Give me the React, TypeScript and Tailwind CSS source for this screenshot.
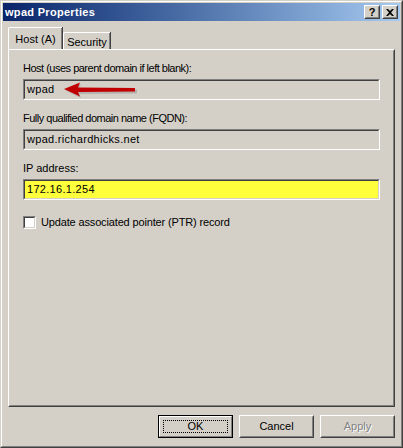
import type { ReactNode } from "react";

const font = { fontFamily: '"Liberation Sans", Arial, sans-serif' };

function Sunken({ children, className = "" }: { children: ReactNode; className?: string }) {
  return (
    <div className="border border-t-[#808080] border-l-[#808080] border-b-white border-r-white">
      <div
        className={`flex h-[19px] items-center border border-t-[#404040] border-l-[#404040] border-b-[#d4d0c8] border-r-[#d4d0c8] pl-[2px] text-[11px] tracking-[0.3px] text-black ${className}`}
      >
        {children}
      </div>
    </div>
  );
}

function Button({
  label,
  isDefault = false,
  disabled = false,
}: {
  label: string;
  isDefault?: boolean;
  disabled?: boolean;
}) {
  if (isDefault) {
    return (
      <div className="h-[23px] w-[75px] border border-black">
        <div className="h-full border border-t-white border-l-white border-b-[#808080] border-r-[#808080]">
          <div className="flex h-full items-center justify-center border border-transparent p-[2px]">
            <span className="flex h-full w-full items-center justify-center border border-dotted border-black text-[11px] text-black">
              {label}
            </span>
          </div>
        </div>
      </div>
    );
  }
  return (
    <div className="h-[23px] w-[75px] border border-t-white border-l-white border-b-[#404040] border-r-[#404040]">
      <div className="flex h-full items-center justify-center border border-t-[#d4d0c8] border-l-[#d4d0c8] border-b-[#808080] border-r-[#808080]">
        <span
          className={`text-[11px] ${disabled ? "text-[#808080] [text-shadow:1px_1px_0_#fff]" : "text-black"}`}
        >
          {label}
        </span>
      </div>
    </div>
  );
}

function CaptionButton({ children }: { children: ReactNode }) {
  return (
    <div className="h-[14px] w-[16px] border border-t-white border-l-white border-b-[#404040] border-r-[#404040] bg-[#d4d0c8]">
      <div className="flex h-full w-full items-center justify-center border border-t-[#d4d0c8] border-l-[#d4d0c8] border-b-[#808080] border-r-[#808080]">
        {children}
      </div>
    </div>
  );
}

function Field({
  label,
  value,
  yellow = false,
  arrow = false,
  tight = false,
}: {
  label: string;
  value: string;
  yellow?: boolean;
  arrow?: boolean;
  tight?: boolean;
}) {
  return (
    <div className="flex flex-col">
      <div className={`h-[13px] text-[11px] leading-[13px] text-black ${tight ? "tracking-[-0.5px]" : ""}`}>{label}</div>
      <div className="relative mt-[4px]">
        <Sunken className={yellow ? "bg-[#ffff3c]" : "bg-[#d4d0c8]"}>{value}</Sunken>
        {arrow && (
          <svg className="absolute left-[40px] top-[2px]" width="76" height="18" viewBox="0 0 76 18">
            <polygon points="2.5,9.5 18,3 16,8 74,8.5 74,12.5 16,13 18,17" fill="#7a7a7a" opacity="0.35" />
            <polygon points="1,8 17,1.5 15,6.5 72,7 72,10.5 15,11 17,15.5" fill="#c00000" />
          </svg>
        )}
      </div>
    </div>
  );
}

export default function App() {
  return (
    <div className="h-[448px] w-[403px] overflow-hidden bg-[#d4d0c8]" style={font}>
      <div className="h-full border border-t-[#d4d0c8] border-l-[#d4d0c8] border-b-[#404040] border-r-[#404040]">
        <div className="flex h-full flex-col border border-t-white border-l-white border-b-[#808080] border-r-[#808080] p-[1px]">
          {/* title bar */}
          <div className="flex h-[18px] shrink-0 items-center bg-gradient-to-r from-[#0a246a] to-[#a6caf0] pl-[2px] pr-[2px]">
            <span className="flex-1 text-[11px] font-bold tracking-[0.3px] text-white">wpad Properties</span>
            <div className="flex gap-[2px]">
              <CaptionButton>
                <span className="text-[11px] font-bold leading-none text-black">?</span>
              </CaptionButton>
              <CaptionButton>
                <svg width="8" height="7" viewBox="0 0 8 7">
                  <path d="M0 0h2l2 2 2-2h2L5 3.5 8 7H6L4 5 2 7H0l3-3.5z" fill="#000" />
                </svg>
              </CaptionButton>
            </div>
          </div>

          {/* tabs */}
          <div className="ml-[5px] mt-[7px] flex h-[21px] items-end">
            <div className="relative z-10 flex h-[22px] w-[54px] items-start justify-center rounded-tl-[2px] border-l border-t border-l-white border-t-white bg-[#d4d0c8] pt-[3px] text-[11px] text-black shadow-[inset_-1px_0_#808080,1px_0_#404040]">
              Host (A)
            </div>
            <div className="ml-[1px] flex h-[17px] w-[47px] items-start justify-center rounded-tl-[2px] border-l border-t border-l-white border-t-white pt-[1px] text-[11px] text-black shadow-[inset_-1px_0_#808080,1px_0_#404040]">
              Security
            </div>
          </div>

          {/* tab panel */}
          <div className="ml-[5px] mr-[5px] h-[358px] border border-t-white border-l-white border-b-[#404040] border-r-[#404040]">
            <div className="flex h-full flex-col gap-[12px] border border-transparent border-b-[#808080] border-r-[#808080] px-[13px] pt-[11px]">
              <Field label="Host (uses parent domain if left blank):" value="wpad" arrow tight />
              <Field label="Fully qualified domain name (FQDN):" value="wpad.richardhicks.net" tight />
              <Field label="IP address:" value="172.16.1.254" yellow />
              <div className="mt-[2px] flex items-center gap-[5px]">
                <div className="h-[13px] w-[13px] border border-t-[#808080] border-l-[#808080] border-b-white border-r-white">
                  <div className="h-full w-full border border-t-[#404040] border-l-[#404040] border-b-[#d4d0c8] border-r-[#d4d0c8] bg-white" />
                </div>
                <span className="text-[11px] tracking-[-0.15px] text-black">Update associated pointer (PTR) record</span>
              </div>
            </div>
          </div>

          {/* buttons */}
          <div className="mr-[5px] mt-[8px] flex justify-end gap-[6px]">
            <Button label="OK" isDefault />
            <Button label="Cancel" />
            <Button label="Apply" disabled />
          </div>
        </div>
      </div>
    </div>
  );
}
